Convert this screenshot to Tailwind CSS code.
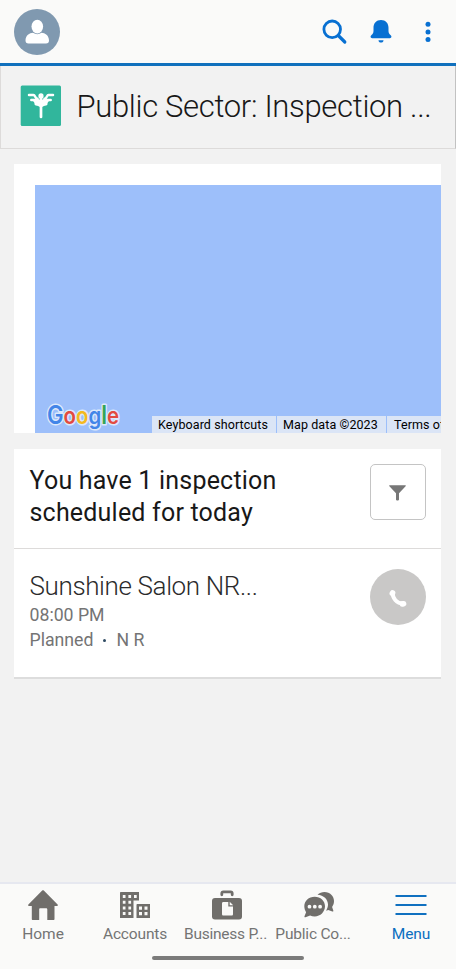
<!DOCTYPE html>
<html lang="en">
<head>
<meta charset="utf-8">
<meta name="viewport" content="width=device-width, initial-scale=1">
<title>Public Sector: Inspection</title>
<script src="https://cdn.jsdelivr.net/npm/@tailwindcss/browser@4"></script>
</head>
<body class="h-[969px] w-[456px] overflow-hidden bg-[#f2f2f2] font-[Roboto,sans-serif]">
<div class="flex h-full flex-col">
  <header class="flex h-[66px] shrink-0 items-center justify-between border-b-[3px] border-[#1070bd] bg-[#fafaf9] pl-[14px] pr-[20px]">
    <svg class="size-[46px]" viewBox="0 0 46 46"><circle cx="23" cy="23" r="23" fill="#8099b0"/><ellipse cx="23.3" cy="17.6" rx="5.8" ry="6.8" fill="#fff"/><path d="M11.500 31.500c0-5 4-7.500 7.500-7.700 2.600 1.800 6 1.800 8.500 0 3.500.2 7.500 2.700 7.500 7.700 0 2-1 3-3 3H14.500c-2 0-3-1-3-3z" fill="#fff"/></svg>
    <div class="flex items-center">
      <svg class="mr-[22px] size-[26px]" viewBox="0 0 26 26" fill="none" stroke="#0870d2" stroke-width="2.800"><circle cx="10.200" cy="10.300" r="8.300"/><path d="M16.300 16.500l6.500 6.500" stroke-width="3.200" stroke-linecap="round"/></svg>
      <svg class="mr-[33px] h-[26px] w-[22px]" viewBox="0 0 22 26" fill="#0870d2"><path d="M11 1c4.600 0 7.500 3.200 7.500 7.800v3c0 2.200.7 3.300 2 4.200 1.500 1 1.200 3.200-.6 3.200H2.100C.3 19.200 0 17 1.500 16c1.300-.9 2-2 2-4.200v-3C3.500 4.200 6.400 1 11 1z"/><path d="M8.500 21.300h5c0 1.400-1 2.300-2.500 2.300s-2.500-.9-2.500-2.300z"/></svg>
      <svg class="mr-[5px] h-[26px] w-[6px]" viewBox="0 0 6 26" fill="#0870d2"><circle cx="3" cy="5.200" r="2.500"/><circle cx="3" cy="12.900" r="2.500"/><circle cx="3" cy="20.600" r="2.500"/></svg>
    </div>
  </header>

  <section class="flex h-[83px] shrink-0 items-center border border-t-0 border-[#dddbda] border-r-[#c2c2c2] pl-[19px]">
    <svg class="mb-[3px] size-[42px] shrink-0" viewBox="0 0 42 42"><rect x=".7" y=".5" width="40.300" height="40.500" rx="1.500" fill="#31b69c"/><g stroke-linecap="round"><circle cx="21" cy="10.900" r="2.600" fill="#fff"/><path d="M21 12v20" stroke="#fff" stroke-width="2.700"/><path d="M9 10h4.500c1.700 0 1.800 3.800 4 3.800M33 10h-4.500c-1.700 0-1.800 3.800-4 3.800M11.300 15h4M30.700 15h-4" fill="none" stroke="#fff" stroke-width="2.500"/><path d="M13.300 13.900h4.200c1.200 0 2.200.7 3.500 1.300 1.300-.6 2.300-1.300 3.500-1.300h4.200v2.600c-1 .8-1.200 1.500-1.200 2.500 0 1.200-1 1.500-2.500 1.700-1.500.3-2.500 1.500-4 1.500s-2.500-1.200-4-1.500c-1.500-.2-2.500-.5-2.500-1.700 0-1-.2-1.700-1.200-2.500z" fill="#fff"/></g></svg>
    <h1 class="ml-[14.500px] whitespace-nowrap text-[31px] leading-[40px] font-light tracking-[-0.320px] text-[#181818]">Public Sector: Inspection ...</h1>
  </section>

  <main class="flex grow flex-col pl-[14px] pr-[15px] pt-[15px]">
    <section class="h-[269px] shrink-0 overflow-hidden bg-white pl-[21px] pt-[20.500px]">
      <div class="flex h-full items-end justify-between overflow-hidden bg-[#9dbffa]">
        <svg class="ml-[9px] h-[34px] w-[80px] shrink-0" viewBox="0 0 80 34" role="img" aria-label="Google"><text x="3" y="25" font-family="Inter" font-weight="600" font-size="25" textLength="72" lengthAdjust="spacingAndGlyphs" stroke="#dce8fb" stroke-width="3" stroke-linejoin="round" paint-order="stroke"><tspan fill="#4285e8">G</tspan><tspan fill="#e34a40" font-size="23">o</tspan><tspan fill="#f4b921" font-size="23">o</tspan><tspan fill="#4285e8" font-size="23">g</tspan><tspan fill="#35a456">l</tspan><tspan fill="#e34a40" font-size="23">e</tspan></text></svg>
        <div class="flex h-[17px] w-[289px] shrink-0 gap-px overflow-hidden whitespace-nowrap text-[12.500px] leading-[17px] tracking-[0.090px] text-black">
          <span class="w-[124px] shrink-0 bg-[#dbe5f6] pl-[6px]">Keyboard shortcuts</span>
          <span class="w-[109px] shrink-0 bg-[#dbe5f6] pl-[6px]">Map data ©2023</span>
          <span class="w-[90px] shrink-0 bg-[#dbe5f6] pl-[7px]">Terms of Use</span>
        </div>
      </div>
    </section>

    <section class="mt-4 h-[230px] shrink-0 border-b-2 border-[#dddddd] bg-white">
      <div class="flex h-[100px] justify-between border-b border-[#dddbda] px-[15px] pt-[15px]">
        <h2 class="pt-px pl-[0.500px] text-[25px] leading-[32px] tracking-[0.200px] text-[#181818]">You have 1 inspection<br>scheduled for today</h2>
        <button class="flex size-[56px] items-center justify-center rounded-[5px] border border-[#c4c4c4]"><svg class="mt-[2px] mr-px h-[16px] w-[17px]" viewBox="0 0 17 16" fill="#777"><path d="M.8.300h15.400c.6 0 .8.600.4 1L10 8.200v6.300c0 1.300-3 1.300-3 0V8.200L.4 1.300C0 .9.2.300.8.300z"/></svg></button>
      </div>
      <div class="flex justify-between px-[15px] pt-[20px]">
        <div class="pt-px pl-[0.500px] text-[17.700px] leading-[25px] text-[#747474]">
          <h3 class="text-[26px] leading-[33px] font-light tracking-[-0.370px] text-[#2b2b2b]">Sunshine Salon NR...</h3>
          <p>08:00 PM</p>
          <p class="flex items-center">Planned<span class="mx-[10px] size-[3px] rounded-full bg-[#2e4a62]"></span>N R</p>
        </div>
        <svg class="size-[56px]" viewBox="0 0 56 56"><circle cx="28" cy="28" r="28" fill="#c9c8c7"/><path d="M22.800 23.800c-.5 5.500 4.200 10.800 10 10.800" fill="none" stroke="#fff" stroke-width="4"/><path d="M22.300 24.300l.3-.5M32.300 35l1.300-.3" stroke="#fff" stroke-width="5.500" stroke-linecap="round"/></svg>
      </div>
    </section>
  </main>

  <nav class="flex h-[87px] shrink-0 flex-col items-center border-t-2 border-[#e6e8f0] bg-[#fafaf9] text-[15.500px] leading-[20px] tracking-[-0.150px] text-[#747474]">
    <div class="grid w-full grid-cols-[86px_98px_86px_86px_100px] pt-[5px] text-center whitespace-nowrap">
      <div class="flex flex-col items-center gap-[3px]"><svg class="size-[32px]" viewBox="0 0 32 32" fill="#706e6b"><path d="M15.200 1.500c.5-.5 1.100-.5 1.600 0l13.800 14c.6.700.3 1.500-.6 1.500h-2.500v13c0 .6-.4 1-1 1h-6.200V20.500c0-.8-.5-1.200-1.200-1.200h-5.700c-.8 0-1.200.5-1.200 1.200V31H5.800c-.6 0-1-.4-1-1V17H2c-.9 0-1.200-.8-.6-1.500z"/></svg><span class="tracking-normal">Home</span></div>
      <div class="flex flex-col items-center gap-[3px]"><svg class="size-[32px]" viewBox="0 0 32 32" fill="#706e6b" fill-rule="evenodd"><path d="M2 3h18v8.500h-5.500V29H1V4c0-.6.4-1 1-1zM3.800 6v3h2.700V6zM9.400 6v3h2.700V6zM15 6v3h2.700V6zM3.800 11.700v3h2.700v-3zM9.400 11.700v3h2.700v-3zM3.800 17.400v3h2.700v-3zM9.400 17.400v3h2.700v-3zM3.800 23.100v3h2.700v-3zM9.400 23.100v3h2.700v-3z"/><path d="M18.500 15H31v14H17.500V16c0-.6.400-1 1-1zM20 17.500v3.200h3v-3.200zM25.500 17.500v3.200h3v-3.200zM20 23.100v3.200h3v-3.200zM25.500 23.100v3.200h3v-3.200z"/></svg><span>Accounts</span></div>
      <div class="flex flex-col items-center gap-[3px]"><svg class="size-[32px]" viewBox="0 0 32 32"><path d="M10.800 5.800V4.500c0-1 .5-1.600 1.600-1.600h7.200c1.100 0 1.600.6 1.600 1.600v1.300" fill="none" stroke="#706e6b" stroke-width="2.800" stroke-linecap="round"/><rect x="1" y="9" width="30" height="21.500" rx="3" fill="#706e6b"/><path d="M12.500 13h4.800v4.500H22V25c0 1-.5 1.500-1.500 1.500h-8c-1 0-1.500-.5-1.500-1.500V14.500c0-1 .5-1.500 1.500-1.500zM18.700 12.700l3.500 3.500h-3.500z" fill="#fafaf9"/></svg><span class="-ml-[3px] tracking-[-0.250px]">Business P...</span></div>
      <div class="flex flex-col items-center gap-[3px]"><svg class="ml-[11px] size-[32px]" viewBox="0 0 32 32" fill="#706e6b"><path d="M14.500 5.700C16.500 3.900 18.800 3 21.500 3 27 3 31 7 31 12c0 2.300-.7 4.200-1.900 5.900l1.200 3.500c.3.800-.3 1.300-1 1l-4-1.400-2.200.7c1.300-2 1.900-4 1.900-6.100 0-5.300-4.300-9.500-10.500-9.900z"/><path fill-rule="evenodd" d="M11.700 7.700c5.900 0 10.300 4.200 10.300 9.600S17.500 27.500 11.700 27.500c-1.700 0-3.200-.4-4.600-1.100l-4.600 1.800c-.8.300-1.300-.3-1-1l1.600-4C2 21.500 1.300 19.500 1.300 17.300c0-5.400 4.500-9.600 10.400-9.600zM6.500 15.800a1.900 1.900 0 100 3.800 1.900 1.900 0 000-3.800zM11.800 15.800a1.900 1.900 0 100 3.800 1.900 1.900 0 000-3.800zM17.100 15.800a1.900 1.900 0 100 3.800 1.900 1.900 0 000-3.800z"/></svg><span class="tracking-[-0.200px]">Public Co...</span></div>
      <div class="flex flex-col items-center gap-[3px] pl-[10px] text-[#0b6fc0]"><svg class="size-[32px]" viewBox="0 0 32 32" stroke="#1070c0" stroke-width="2.200"><path d="M.5 7h31M.5 16h31M.5 25h31"/></svg><span>Menu</span></div>
    </div>
    <div class="mt-[12px] h-[4px] w-[152px] rounded-full bg-[#7b7b7b]"></div>
  </nav>
</div>
</body>
</html>
